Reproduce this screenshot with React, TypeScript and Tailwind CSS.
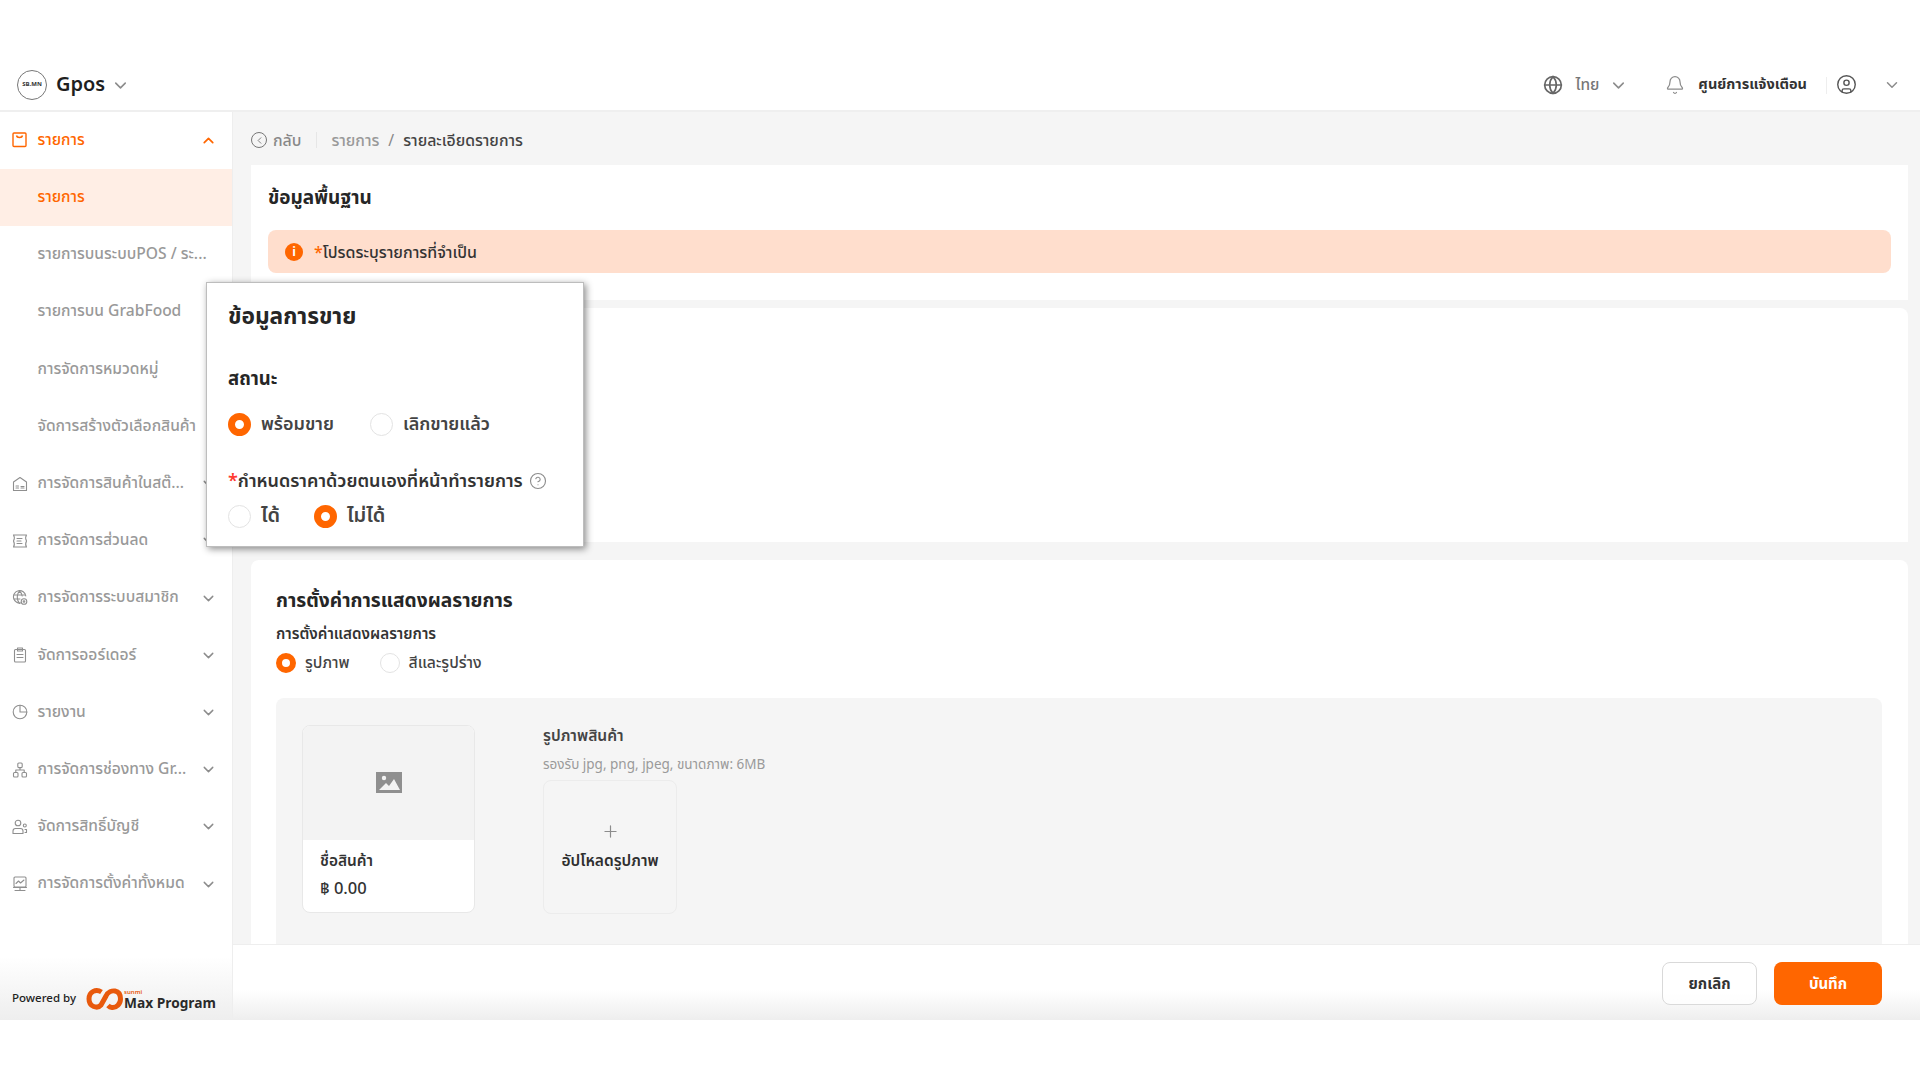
import React from "react";
import { ChevronDown, ChevronUp, ChevronLeft, Globe, Bell, CircleUser, Plus, CircleHelp } from "lucide-react";

const font = { fontFamily: '"Noto Sans Thai","Inter","Noto Sans","Liberation Sans",sans-serif' };

function Ico({ children }: { children: React.ReactNode }) {
  return (
    <svg width="16" height="16" viewBox="0 0 16 16" fill="none" stroke="#8f8f8f" strokeWidth="1.1" strokeLinecap="round" strokeLinejoin="round">
      {children}
    </svg>
  );
}

function BagIcon() {
  return (
    <svg width="15" height="16" viewBox="0 0 15 16" fill="none" stroke="#ff6600" strokeWidth="1.4" className="-mt-[2px]">
      <rect x="1" y="1" width="13" height="13.5" rx="1" />
      <path d="M4.5 3.5c.5 2.6 5.5 2.6 6 0" />
    </svg>
  );
}

const HouseI = <Ico><path d="M1.5 6 8 1.5 14.500 6v8.500h-13z" /><path d="M4 10h2.500M4 12h2.500M9 12h3M9 10.500h3" /></Ico>;
const TicketI = <Ico><path d="M1.500 2h13c-1.200 1.700-1.200 3.500 0 6-1.200 2.500-1.200 4.300 0 6h-13c1.200-1.700 1.200-3.500 0-6 1.200-2.500 1.200-4.300 0-6z" /><path d="M5 5.500h5M5 8h4M5 10.500h5" /></Ico>;
const GlobeI = <Ico><path d="M9.500 12.800A6.200 6.200 0 1 1 13.800 6" /><path d="M1.800 5h11M2 9h6M7.500 1c-3 3-3 9 0 12.500M7.500 1c1.500 1.300 2.300 3 2.600 5" /><circle cx="12" cy="11.500" r="2.800" /><circle cx="12" cy="11.500" r=".8" /></Ico>;
const ClipI = <Ico><rect x="2.500" y="2.500" width="11" height="12.500" rx="1" /><path d="M5.500 1h5v3h-5zM5 7.500h6M5 10.500h6" /></Ico>;
const PieI = <Ico><circle cx="8" cy="8" r="6.800" /><path d="M8 1.200V8h6.800" /></Ico>;
const NetI = <Ico><rect x="5.800" y="1" width="4.400" height="4.600" rx="1" /><path d="M8 5.600V8M3.800 10.500V8h8.400v2.500" /><rect x="1.500" y="10.500" width="4.500" height="4.500" rx="1" /><rect x="10" y="10.500" width="4.500" height="4.500" rx="1" /></Ico>;
const UsersI = <Ico><circle cx="6" cy="4" r="2.800" /><path d="M1 14.500v-2.500c0-1.500 1-2.500 2.500-2.500h5c1.500 0 2.500 1 2.500 2.500v2.500z" /><circle cx="12.800" cy="6.500" r="1.500" /><path d="M13 10.500h1.500v3H13" /></Ico>;
const MonI = <Ico><rect x="2" y="1" width="12" height="10" rx="1" /><path d="M4 7.500 6.500 5l2 2L12 4M1.500 11.500h13M8 11.500v2.500M3 14.500h10" /></Ico>;

function Row({ icon, label, open, active }: { icon?: React.ReactNode; label: string; open?: boolean; active?: boolean }) {
  return (
    <div className={`h-[57.2px] flex items-center shrink-0 pl-[12px] pr-[15px] ${active ? "bg-[#ffeee5]" : ""}`}>
      <span className="w-[25.5px] shrink-0 flex items-center">{icon}</span>
      <span className={`flex-1 text-[15.6px] font-medium whitespace-nowrap ${active || open ? "text-[#ff6600]" : "text-[#999999]"}`}>{label}</span>
      {open ? <ChevronUp size={17} className="text-[#ff6600]" strokeWidth={2.4} /> : icon ? <ChevronDown size={17} className="text-[#8c8c8c]" /> : null}
    </div>
  );
}

function Radio({ on, big }: { on?: boolean; big?: boolean }) {
  const size = big ? "w-[23px] h-[23px]" : "w-[20px] h-[20px]";
  const ring = on ? (big ? "border-[7px] border-[#ff6600]" : "border-[6px] border-[#ff6600]") : "border border-[#e3e3e3]";
  return <span className={`${size} ${ring} rounded-full bg-white shrink-0 block`} />;
}

function Logo() {
  return (
    <svg width="37" height="24" viewBox="0 0 37 24" fill="none" stroke="#e8590c" strokeWidth="5">
      <path d="M15.500 5C10 1.500 3 4.500 3 12c0 8 8.500 10 12 6L20 9c2-4 6-5.500 9-5 4 .8 5.500 4.500 5.500 8 0 5-4 9-8.500 8.500-2-.2-3-1-4-2" />
    </svg>
  );
}

export default function App() {
  return (
    <div style={font} className="w-[1920px] h-[1080px] bg-white flex flex-col overflow-hidden relative text-[#262626]">
      <div className="h-[60px] shrink-0" />
      <header className="h-[52px] shrink-0 flex items-center pl-[17px] pr-[19px] border-b-2 border-[#efefef] bg-white">
        <div className="w-[30px] h-[30px] rounded-full border border-[#777] flex items-center justify-center">
          <span className="text-[6px] font-bold text-[#333] leading-none whitespace-nowrap">SB.MN</span>
        </div>
        <span className="ml-[9px] text-[20px] font-semibold text-[#1f1f1f]">Gpos</span>
        <ChevronDown size={19} className="ml-[6px] text-[#8c8c8c]" />
        <div className="flex-1" />
        <Globe size={20} className="text-[#666]" />
        <span className="ml-[13px] mt-[2px] text-[15.5px] font-medium text-[#777]">ไทย</span>
        <ChevronDown size={19} className="ml-[10px] text-[#8c8c8c]" />
        <Bell size={20} className="ml-[37px] text-[#8c8c8c]" strokeWidth={1.5} />
        <span className="ml-[13px] mt-[2px] text-[14.5px] font-bold text-[#333]">ศูนย์การแจ้งเตือน</span>
        <span className="ml-[19px] h-[17px] w-px bg-[#eee]" />
        <CircleUser size={21} className="ml-[9px] -mt-[1px] text-[#555]" strokeWidth={1.6} />
        <ChevronDown size={18} className="ml-[26px] text-[#8c8c8c]" />
      </header>

      <div className="h-[908px] shrink-0 flex">
        <aside className="w-[233px] shrink-0 flex flex-col border-r border-[#eeeeee] bg-gradient-to-b from-white from-[93%] to-[#eeeeee]">
          <Row icon={<BagIcon />} label="รายการ" open />
          <Row label="รายการ" active />
          <Row label="รายการบนระบบPOS / ระ..." />
          <Row label="รายการบน GrabFood" />
          <Row label="การจัดการหมวดหมู่" />
          <Row label="จัดการสร้างตัวเลือกสินค้า" />
          <Row icon={HouseI} label="การจัดการสินค้าในสต๊..." />
          <Row icon={TicketI} label="การจัดการส่วนลด" />
          <Row icon={GlobeI} label="การจัดการระบบสมาชิก" />
          <Row icon={ClipI} label="จัดการออร์เดอร์" />
          <Row icon={PieI} label="รายงาน" />
          <Row icon={NetI} label="การจัดการช่องทาง Gr..." />
          <Row icon={UsersI} label="จัดการสิทธิ์บัญชี" />
          <Row icon={MonI} label="การจัดการตั้งค่าทั้งหมด" />
          <div className="flex-1" />
          <div className="h-[43px] shrink-0 flex items-center pl-[12px]">
            <span className="text-[11.5px] font-medium text-[#222] whitespace-nowrap">Powered by</span>
            <span className="ml-[10px]"><Logo /></span>
            <span className="ml-[1px] flex flex-col mt-[2px]">
              <span className="text-[6px] font-semibold text-[#e8590c] leading-[7px] lowercase">sunmi</span>
              <span className="text-[13.7px] font-bold text-[#2a2a2a] leading-[15px] whitespace-nowrap">Max Program</span>
            </span>
          </div>
        </aside>

        <main className="flex-1 flex flex-col min-w-0 bg-[#f5f5f5]">
          <div className="flex-1 min-h-0 overflow-hidden pl-[18px] pr-[12px]">
            <div className="h-[53px] pt-[3px] flex items-center text-[15.8px]">
              <span className="w-[16px] h-[16px] rounded-full border border-[#777] flex items-center justify-center">
                <ChevronLeft size={11} className="text-[#777]" />
              </span>
              <span className="ml-[6px] mt-[4px] text-[#888] font-medium">กลับ</span>
              <span className="ml-[15px] h-[16px] w-px bg-[#e6e6e6]" />
              <span className="ml-[14px] mt-[4px] text-[#999] font-medium">รายการ</span>
              <span className="mx-[9px] mt-[4px] text-[#888]">/</span>
              <span className="mt-[4px] text-[#444] font-medium">รายละเอียดรายการ</span>
            </div>

            <section className="h-[135px] bg-white px-[17px] pt-[19px]">
              <h2 className="h-[30px] flex items-center text-[19px] font-bold text-[#262626]">ข้อมูลพื้นฐาน</h2>
              <div className="mt-[16px] h-[43px] rounded-[8px] bg-[#ffdecd] flex items-center pl-[17px]">
                <span className="w-[18px] h-[18px] rounded-full bg-[#ff6600] text-white text-[12px] font-bold flex items-center justify-center">i</span>
                <span className="ml-[11px] mt-[2px] text-[16px] font-medium text-[#333]"><span className="text-[#ff6600]">*</span>โปรดระบุรายการที่จำเป็น</span>
              </div>
            </section>

            <section className="h-[234px] mt-[8px] bg-white rounded-t-[8px]" />

            <section className="mt-[18px] h-[500px] bg-white rounded-t-[8px] pl-[25px] pr-[26px] pt-[27px]">
              <h2 className="h-[30px] flex items-center text-[19.2px] font-bold text-[#262626]">การตั้งค่าการแสดงผลรายการ</h2>
              <div className="mt-[6px] h-[24px] flex items-center text-[15.2px] font-semibold text-[#333]">การตั้งค่าแสดงผลรายการ</div>
              <div className="mt-[4px] h-[24px] flex items-center text-[15.7px] font-medium text-[#444]">
                <Radio on />
                <span className="ml-[9px] mt-[1px]">รูปภาพ</span>
                <span className="ml-[30px]"><Radio /></span>
                <span className="ml-[9px] mt-[1px]">สีและรูปร่าง</span>
              </div>
              <div className="mt-[23px] bg-[#f5f5f5] rounded-[8px] h-[300px] pt-[27px] pl-[26px] flex">
                <div className="w-[173px] h-[188px] rounded-[8px] border border-[#e8e8e8] bg-white overflow-hidden">
                  <div className="h-[114px] bg-[#f3f3f3] flex items-center justify-center">
                    <svg width="26" height="21" viewBox="0 0 26 21" className="-mt-[2px]">
                      <rect width="26" height="21" fill="#8f8f8f" />
                      <circle cx="8" cy="6" r="2.200" fill="#f3f3f3" />
                      <path d="M3 18 10 11l3 3 5-7 6 11z" fill="#f3f3f3" />
                    </svg>
                  </div>
                  <div className="pl-[17px] pt-[9px]">
                    <div className="text-[15.4px] font-semibold text-[#333] leading-[26px]">ชื่อสินค้า</div>
                    <div className="text-[16.500px] font-medium text-[#333] leading-[28px]">฿ 0.00</div>
                  </div>
                </div>
                <div className="ml-[68px]">
                  <div className="mt-[1px] h-[22px] flex items-center text-[15.600px] font-semibold text-[#444]">รูปภาพสินค้า</div>
                  <div className="mt-[7px] h-[20px] flex items-center text-[13.500px] text-[#9a9a9a] whitespace-nowrap">รองรับ jpg, png, jpeg, ขนาดภาพ: 6MB</div>
                  <div className="mt-[5px] w-[134px] h-[134px] rounded-[8px] border border-[#ececec] flex flex-col items-center pt-[41px]">
                    <Plus size={19} className="text-[#8c8c8c]" strokeWidth={1.5} />
                    <span className="mt-[9px] text-[15.500px] font-semibold text-[#2f2f2f]">อัปโหลดรูปภาพ</span>
                  </div>
                </div>
              </div>
            </section>
          </div>

          <footer className="h-[76px] shrink-0 pt-[2px] flex items-center justify-end pr-[38px] gap-[17px] border-t border-[#eeeeee] bg-gradient-to-b from-white from-[60%] to-[#eeeeee]">
            <button className="w-[95px] h-[43px] pt-[3px] rounded-[8px] border border-[#d9d9d9] bg-white/70 text-[15px] font-bold text-[#333]">ยกเลิก</button>
            <button className="w-[108px] h-[43px] pt-[3px] rounded-[8px] bg-[#ff6600] text-[15px] font-bold text-white">บันทึก</button>
          </footer>
        </main>
      </div>

      <div className="absolute left-[206px] top-[282px] w-[378px] h-[265px] bg-white border border-[#bdbdbd] shadow-[2px_2px_7px_rgba(0,0,0,0.45)] pl-[21px] pt-[16px]">
        <h2 className="h-[36px] flex items-center text-[22.700px] font-bold text-[#262626]">ข้อมูลการขาย</h2>
        <div className="mt-[32px] h-[26px] flex items-center text-[18.500px] font-bold text-[#262626]">สถานะ</div>
        <div className="mt-[18px] h-[26px] flex items-center text-[18px] font-semibold text-[#444]">
          <Radio on big />
          <span className="ml-[10px]">พร้อมขาย</span>
          <span className="ml-[36px]"><Radio big /></span>
          <span className="ml-[10px]">เลิกขายแล้ว</span>
        </div>
        <div className="mt-[31px] h-[26px] flex items-center text-[18px] font-semibold text-[#333]">
          <span className="text-[#ff3b30]">*</span>กำหนดราคาด้วยตนเองที่หน้าทำรายการ
          <CircleHelp size={18} className="ml-[6px] text-[#8c8c8c]" strokeWidth={1.5} />
        </div>
        <div className="mt-[9px] h-[26px] flex items-center text-[18px] font-semibold text-[#444]">
          <Radio big />
          <span className="ml-[10px] text-[20px]">ได้</span>
          <span className="ml-[34px]"><Radio on big /></span>
          <span className="ml-[10px] text-[20px]">ไม่ได้</span>
        </div>
      </div>
    </div>
  );
}
